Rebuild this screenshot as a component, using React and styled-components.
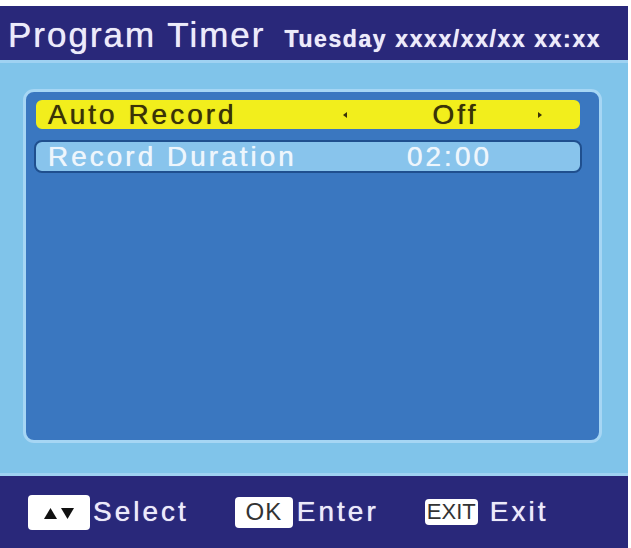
import React from "react";
import styled, { createGlobalStyle } from "styled-components";

const Global = createGlobalStyle`
  html, body {
    margin: 0;
    padding: 0;
    background: #ffffff;
  }
  body {
    font-family: "Liberation Sans", Arial, sans-serif;
  }
`;

const Screen = styled.div`
  width: 628px;
  height: 542px;
  margin-top: 6px;
  display: flex;
  flex-direction: column;
  background: #80c4ea;
`;

const Header = styled.div`
  height: 57px;
  box-sizing: border-box;
  background: #29287a;
  border-bottom: 3px solid #9fd2f2;
  display: flex;
  align-items: baseline;
  padding: 9px 0 0 8px;
  color: #ecebfa;
  text-shadow: 0 0 0.7px currentColor;
`;

const Title = styled.span`
  font-size: 35px;
  letter-spacing: 2px;
`;

const DateTime = styled.span`
  margin-left: 19px;
  font-size: 23px;
  font-weight: bold;
  letter-spacing: 1.6px;
`;

const Body = styled.div`
  flex: 1;
  padding: 26px 26px 30px 23px;
  display: flex;
`;

const Panel = styled.div`
  flex: 1;
  background: #3a77c0;
  border: 3px solid #a6d6f4;
  border-radius: 11px;
  padding: 6px 17px 0 8px;
  display: flex;
  flex-direction: column;
  gap: 9px;
`;

const Row = styled.div`
  height: 33px;
  box-sizing: border-box;
  border-radius: 8px;
  display: flex;
  align-items: center;
  padding-left: 12px;
  font-size: 28px;
  letter-spacing: 3px;
  text-shadow: 0 0 0.7px currentColor;
  background: ${(p) => (p.$active ? "#f2ee1c" : "#88c4ec")};
  color: ${(p) => (p.$active ? "#3a3208" : "#eef6fc")};
  border: 2px solid ${(p) => (p.$active ? "#3a77c0" : "#1f4f8e")};
`;

const Label = styled.span`
  width: 295px;
`;

const Arrow = styled.span`
  width: 0;
  height: 0;
  border-top: 3px solid transparent;
  border-bottom: 3px solid transparent;
  ${(p) =>
    p.$dir === "left"
      ? "border-right: 4px solid #3a3208;"
      : "border-left: 4px solid #3a3208;"}
`;

const Value = styled.span`
  width: ${(p) => p.$w}px;
  box-sizing: border-box;
  padding-left: ${(p) => p.$pl || 0}px;
  text-align: center;
`;

const Footer = styled.div`
  height: 75px;
  box-sizing: border-box;
  background: #29287a;
  border-top: 3px solid #9fd2f2;
  display: flex;
  align-items: center;
  padding: 0 0 0 28px;
  gap: 46px;
  color: #eceafa;
`;

const Hint = styled.div`
  display: flex;
  align-items: center;
  gap: ${(p) => p.$gap}px;
  font-size: 28px;
  letter-spacing: 3px;
  text-shadow: 0 0 0.8px currentColor;
`;

const Key = styled.span`
  width: ${(p) => p.$w}px;
  height: ${(p) => p.$h}px;
  background: #ffffff;
  border-radius: 4px;
  display: flex;
  align-items: center;
  justify-content: center;
  color: #333333;
  text-shadow: none;
  font-size: ${(p) => p.$fs || 22}px;
  letter-spacing: ${(p) => p.$ls || 0}px;
`;

const Tri = styled.svg`
  width: 13px;
  height: 11px;
  margin: 2px 2px 0;
`;

export default function App() {
  return (
    <>
      <Global />
      <Screen>
        <Header>
          <Title>Program Timer</Title>
          <DateTime>Tuesday xxxx/xx/xx xx:xx</DateTime>
        </Header>
        <Body>
          <Panel>
            <Row $active>
              <Label>Auto Record</Label>
              <Arrow $dir="left" />
              <Value $w={191} $pl={26}>Off</Value>
              <Arrow $dir="right" />
            </Row>
            <Row>
              <Label>Record Duration</Label>
              <Value $w={213}>02:00</Value>
            </Row>
          </Panel>
        </Body>
        <Footer>
          <Hint $gap={3}>
            <Key $w={62} $h={35}>
              <Tri viewBox="0 0 13 11">
                <path d="M6.5 0 L13 11 L0 11 Z" fill="#111" />
              </Tri>
              <Tri viewBox="0 0 13 11">
                <path d="M0 0 L13 0 L6.5 11 Z" fill="#111" />
              </Tri>
            </Key>
            Select
          </Hint>
          <Hint $gap={4}>
            <Key $w={58} $h={31} $fs={24} $ls={1}>OK</Key>
            Enter
          </Hint>
          <Hint $gap={12}>
            <Key $w={53} $h={26} $fs={22}>EXIT</Key>
            Exit
          </Hint>
        </Footer>
      </Screen>
    </>
  );
}
